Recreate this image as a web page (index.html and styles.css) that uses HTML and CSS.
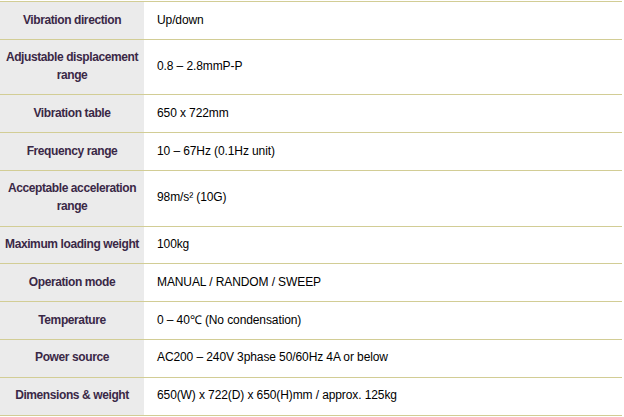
FILE: index.html
```html
<!DOCTYPE html>
<html>
<head>
<meta charset="utf-8">
<link rel="stylesheet" href="styles.css">
</head>
<body>
<table class="spec">
  <tbody>
    <tr><th>Vibration direction</th><td>Up/down</td></tr>
    <tr><th>Adjustable displacement<br>range</th><td>0.8 – 2.8mmP-P</td></tr>
    <tr><th>Vibration table</th><td>650 x 722mm</td></tr>
    <tr><th>Frequency range</th><td>10 – 67Hz (0.1Hz unit)</td></tr>
    <tr><th>Acceptable acceleration<br>range</th><td>98m/s² (10G)</td></tr>
    <tr><th>Maximum loading weight</th><td>100kg</td></tr>
    <tr><th>Operation mode</th><td>MANUAL / RANDOM / SWEEP</td></tr>
    <tr><th>Temperature</th><td>0 – 40℃ (No condensation)</td></tr>
    <tr><th>Power source</th><td>AC200 – 240V 3phase 50/60Hz 4A or below</td></tr>
    <tr><th>Dimensions &amp; weight</th><td>650(W) x 722(D) x 650(H)mm / approx. 125kg</td></tr>
  </tbody>
</table>
</body>
</html>
```

FILE: styles.css
```css
html, body {
  margin: 0;
  padding: 0;
  background: #ffffff;
}

body {
  padding-top: 1px;
  font-family: "Liberation Sans", Arial, sans-serif;
  font-size: 12px;
  color: #000;
}

.spec {
  width: 622px;
  border-collapse: collapse;
  border-spacing: 0;
}

.spec th,
.spec td {
  border-top: 1px solid #d2cd95;
  border-bottom: 1px solid #d2cd95;
  padding: 9.5px 0;
  line-height: 17.8px;
  vertical-align: middle;
}

.spec th {
  width: 144px;
  background: #ebebeb;
  color: #3a2846;
  font-weight: bold;
  text-align: center;
  letter-spacing: -0.4px;
}

.spec td {
  padding-left: 13px;
  text-align: left;
  font-weight: normal;
  letter-spacing: -0.1px;
}
```
